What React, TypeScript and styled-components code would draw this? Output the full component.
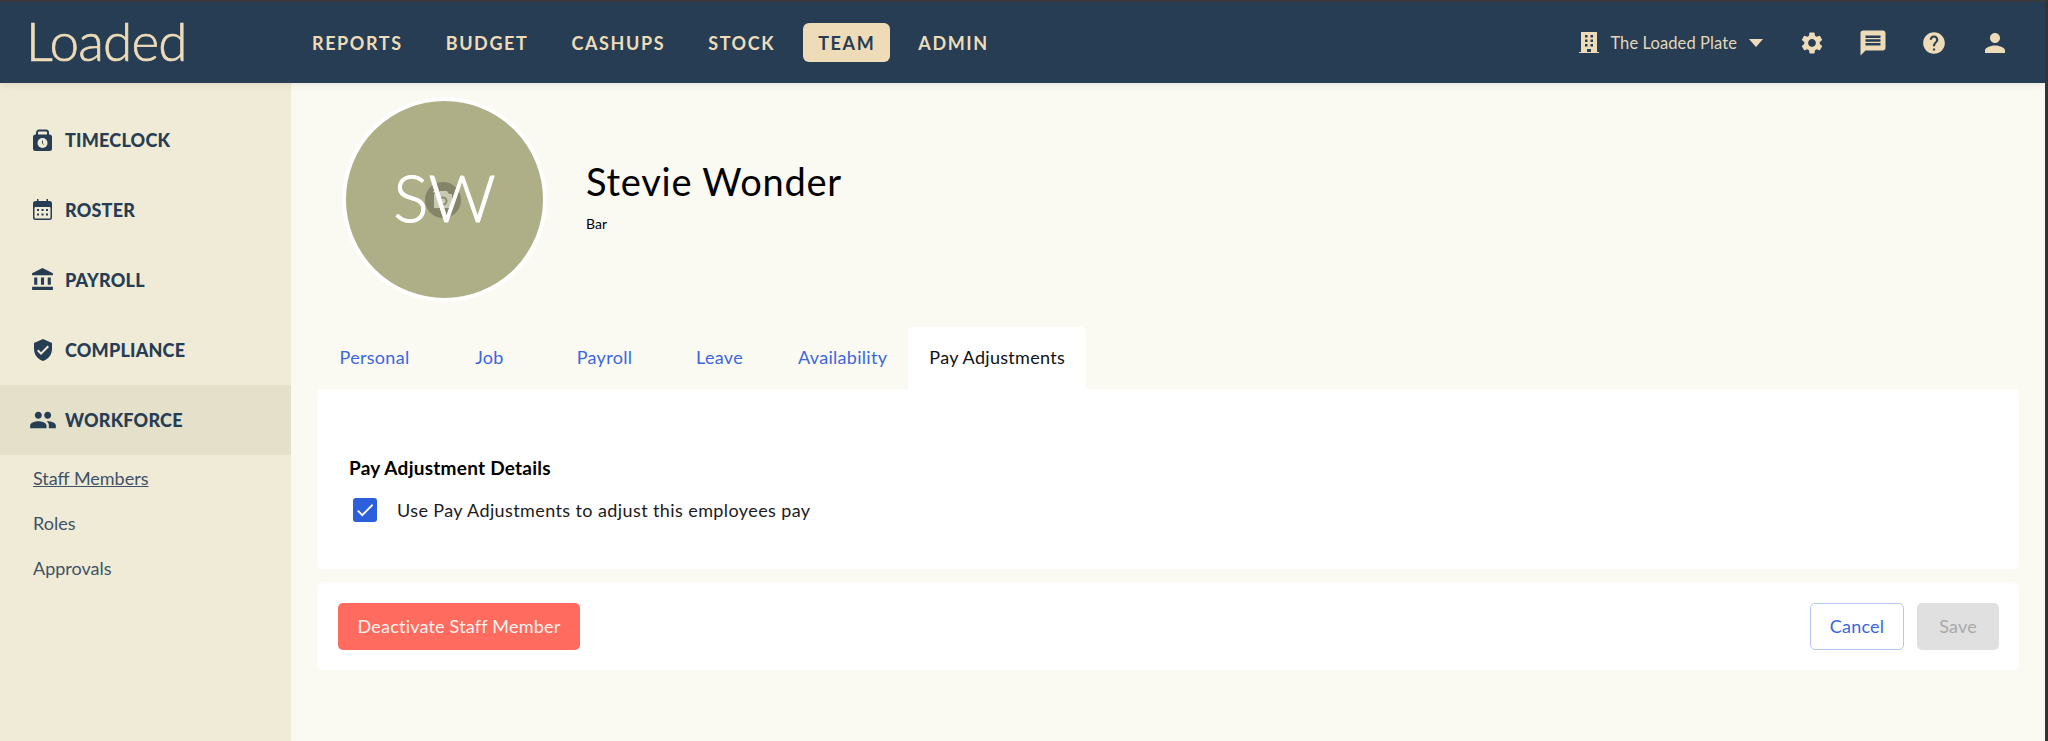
import styled, { createGlobalStyle } from "styled-components";
import {
  MdSettings,
  MdMessage,
  MdHelp,
  MdPerson,
  MdAccountBalance,
  MdPeople,
  MdVerifiedUser,
  MdCheck,
} from "react-icons/md";

const GlobalStyle = createGlobalStyle`
  html, body {
    margin: 0;
    padding: 0;
    height: 100%;
    background: #fafaf2;
  }
  body {
    font-family: "Lato", "Liberation Sans", sans-serif;
    overflow: hidden;
  }
  * {
    box-sizing: border-box;
  }
`;

const navLinks = ["REPORTS", "BUDGET", "CASHUPS", "STOCK", "TEAM", "ADMIN"];
const tabs = ["Personal", "Job", "Payroll", "Leave", "Availability", "Pay Adjustments"];

const BuildingIcon = () => (
  <svg width="20" height="21" viewBox="0 0 20 21">
    <path
      fillRule="evenodd"
      fill="#eedcb9"
      d="M2 0h16v20h2v1H0v-1h2zM6 3v2.500h2.500V3zM11.500 3v2.500H14V3zM6 7.500V10h2.500V7.500zM11.500 7.500V10H14V7.500zM6 12v2.500h2.500V12zM11.500 12v2.500H14V12zM8 17v3h4v-3z"
    />
  </svg>
);

const TimeclockIcon = () => (
  <svg width="19" height="22" viewBox="0 0 19 22">
    <path
      d="M4 7V3.500a2 2 0 0 1 2-2h7a2 2 0 0 1 2 2V7"
      fill="none"
      stroke="#263d54"
      strokeWidth="2"
    />
    <rect x="0" y="5.500" width="19" height="16.500" rx="2.500" fill="#263d54" />
    <circle cx="9.500" cy="14" r="5" fill="#f0ebd6" />
    <path d="M9.500 11.500v2.800l1.300 1.300" fill="none" stroke="#263d54" strokeWidth="0.9" />
  </svg>
);

const RosterIcon = () => (
  <svg width="19" height="21" viewBox="0 0 19 21">
    <path
      fill="#263d54"
      d="M4 0h1.500v2h8V0H15v2h1.500A2.500 2.500 0 0 1 19 4.500v14a2.500 2.500 0 0 1-2.500 2.500h-14A2.500 2.500 0 0 1 0 18.500v-14A2.500 2.500 0 0 1 2.500 2H4z"
    />
    <rect x="1.500" y="8" width="16" height="11.500" rx="1" fill="#f0ebd6" />
    {[5, 9.5, 14].map((x) =>
      [11, 15.5].map((y) => (
        <rect key={`${x}-${y}`} x={x - 1} y={y - 1} width="2" height="2" fill="#263d54" />
      ))
    )}
  </svg>
);

const CameraIcon = () => (
  <svg width="24" height="22" viewBox="0 0 24 22">
    <path d="M3 5h4l2-3h7l2 3h3v14H3z" fill="#c9c9b4" />
    <path d="M2 2h5v1.500H2z" fill="#c9c9b4" />
    <circle cx="12" cy="12" r="4.500" fill="#8d8d72" />
    <circle cx="12" cy="12" r="2.500" fill="#c9c9b4" />
  </svg>
);

const App = () => {
  return (
    <Page>
      <GlobalStyle />
      <TopBar>
        <LogoText>Loaded</LogoText>
        <MainNav>
          {navLinks.map((link) => (
            <NavLink key={link} $active={link === "TEAM"}>
              {link}
            </NavLink>
          ))}
        </MainNav>
        <TopRight>
          <VenuePicker>
            <BuildingIcon />
            <VenueName>The Loaded Plate</VenueName>
            <Caret />
          </VenuePicker>
          <IconRow>
            <MdSettings size={26} />
            <MdMessage size={30} />
            <MdHelp size={26} />
            <MdPerson size={30} />
          </IconRow>
        </TopRight>
      </TopBar>
      <Body>
        <Sidebar>
          <SideItem>
            <SideIcon>
              <TimeclockIcon />
            </SideIcon>
            TIMECLOCK
          </SideItem>
          <SideItem>
            <SideIcon>
              <RosterIcon />
            </SideIcon>
            ROSTER
          </SideItem>
          <SideItem>
            <SideIcon>
              <MdAccountBalance size={25} />
            </SideIcon>
            PAYROLL
          </SideItem>
          <SideItem>
            <SideIcon>
              <MdVerifiedUser size={24} />
            </SideIcon>
            COMPLIANCE
          </SideItem>
          <SideItem $active>
            <SideIcon>
              <MdPeople size={28} />
            </SideIcon>
            WORKFORCE
          </SideItem>
          <SubNav>
            <SubLink $current>Staff Members</SubLink>
            <SubLink>Roles</SubLink>
            <SubLink>Approvals</SubLink>
          </SubNav>
        </Sidebar>
        <Content>
          <Profile>
            <Avatar>
              <CameraBadge>
                <CameraIcon />
              </CameraBadge>
              <Initials>SW</Initials>
            </Avatar>
            <ProfileText>
              <Name>Stevie Wonder</Name>
              <RoleName>Bar</RoleName>
            </ProfileText>
          </Profile>
          <TabRow>
            {tabs.map((tab) => (
              <Tab key={tab} $active={tab === "Pay Adjustments"}>
                {tab}
              </Tab>
            ))}
          </TabRow>
          <Panel>
            <SectionTitle>Pay Adjustment Details</SectionTitle>
            <CheckRow>
              <CheckBox>
                <MdCheck size={22} />
              </CheckBox>
              Use Pay Adjustments to adjust this employees pay
            </CheckRow>
          </Panel>
          <ActionBar>
            <DangerButton>Deactivate Staff Member</DangerButton>
            <ActionRight>
              <CancelButton>Cancel</CancelButton>
              <SaveButton>Save</SaveButton>
            </ActionRight>
          </ActionBar>
        </Content>
      </Body>
    </Page>
  );
};

export default App;

const Page = styled.div`
  width: 2048px;
  height: 741px;
  display: flex;
  flex-direction: column;
  border-top: 2px solid #3a3a3a;
  border-right: 3px solid #333333;
  overflow: hidden;
`;

const TopBar = styled.header`
  position: relative;
  z-index: 1;
  height: 81px;
  flex-shrink: 0;
  display: flex;
  align-items: center;
  background: #263d54;
  color: #eedcb9;
  padding: 0 35px 0 26px;
  box-shadow: 0 2px 8px rgba(0, 0, 0, 0.08);
`;

const LogoText = styled.div`
  width: 158px;
  font-size: 53px;
  font-weight: 300;
  letter-spacing: -0.8px;
  -webkit-text-stroke: 0.7px #eedcb9;
  line-height: 1;
  margin-top: -4px;
`;

const MainNav = styled.nav`
  display: flex;
  align-items: center;
  margin-left: 113px;
`;

const NavLink = styled.a<{ $active?: boolean }>`
  padding: 0 15px;
  height: 39px;
  margin-right: 13px;
  display: flex;
  align-items: center;
  border-radius: 6px;
  font-size: 18px;
  font-weight: 700;
  letter-spacing: 1.6px;
  background: ${(p) => (p.$active ? "#eedcb9" : "transparent")};
  color: ${(p) => (p.$active ? "#263d54" : "#eedcb9")};
`;

const TopRight = styled.div`
  margin-left: auto;
  display: flex;
  align-items: center;
`;

const VenuePicker = styled.div`
  display: flex;
  align-items: center;
`;

const VenueName = styled.span`
  margin-left: 11px;
  font-size: 16.5px;
  letter-spacing: 0.1px;
  color: #e4d6b8;
`;

const Caret = styled.span`
  margin-left: 12px;
  width: 0;
  height: 0;
  border-left: 7px solid transparent;
  border-right: 7px solid transparent;
  border-top: 8px solid #eedcb9;
`;

const IconRow = styled.div`
  display: flex;
  align-items: center;
  gap: 33px;
  margin-left: 36px;
`;

const Body = styled.div`
  flex: 1;
  display: flex;
  min-height: 0;
`;

const Sidebar = styled.aside`
  width: 291px;
  flex-shrink: 0;
  background: #f0ebd6;
  padding-top: 22px;
`;

const SideItem = styled.div<{ $active?: boolean }>`
  height: 70px;
  display: flex;
  align-items: center;
  padding: 0 0 1px 25px;
  background: ${(p) => (p.$active ? "#e4e0ca" : "transparent")};
  color: #263d54;
  font-size: 18px;
  font-weight: 900;
  letter-spacing: 0.2px;
`;

const SideIcon = styled.span`
  width: 35px;
  margin-right: 5px;
  display: flex;
  align-items: center;
  justify-content: center;
  color: #263d54;
`;

const SubNav = styled.div`
  display: flex;
  flex-direction: column;
  padding: 0 0 0 33px;
`;

const SubLink = styled.a<{ $current?: boolean }>`
  height: 45px;
  display: flex;
  align-items: center;
  align-self: flex-start;
  font-size: 18px;
  color: #3f5266;
  text-decoration: ${(p) => (p.$current ? "underline" : "none")};
`;

const Content = styled.main`
  flex: 1;
  min-width: 0;
  padding: 0 26px;
  background: #fafaf2;
`;

const Profile = styled.div`
  display: flex;
  align-items: center;
  padding: 14px 0 0 25px;
`;

const Avatar = styled.div`
  position: relative;
  width: 205px;
  height: 205px;
  flex-shrink: 0;
  border-radius: 50%;
  border: 4px solid #ffffff;
  background: #aeae87;
  display: flex;
  align-items: center;
  justify-content: center;
  padding-bottom: 6px;
`;

const Initials = styled.span`
  position: relative;
  color: #ffffff;
  font-size: 66px;
  font-weight: 300;
  -webkit-text-stroke: 1px #ffffff;
`;

const CameraBadge = styled.div`
  position: absolute;
  left: 79px;
  top: 81px;
  width: 36px;
  height: 36px;
  border-radius: 50%;
  background: rgba(70, 70, 60, 0.4);
  display: flex;
  align-items: center;
  justify-content: center;
`;

const ProfileText = styled.div`
  margin-left: 39px;
  margin-top: -10px;
  color: #000000;
`;

const Name = styled.h1`
  margin: 0;
  font-size: 38px;
  font-weight: 400;
  line-height: 46px;
  letter-spacing: 0.75px;
`;

const RoleName = styled.div`
  margin-top: 11px;
  font-size: 14px;
  line-height: 17px;
`;

const TabRow = styled.div`
  display: flex;
  margin-top: 25px;
`;

const Tab = styled.div<{ $active?: boolean }>`
  min-width: 115px;
  height: 62px;
  padding: 0 21px 2px;
  display: flex;
  align-items: center;
  justify-content: center;
  border-radius: 5px 5px 0 0;
  font-size: 18px;
  letter-spacing: 0.3px;
  color: ${(p) => (p.$active ? "#111111" : "#3a66e0")};
  background: ${(p) => (p.$active ? "#ffffff" : "transparent")};
`;

const Panel = styled.section`
  height: 180px;
  padding: 67px 32px 0;
  background: #ffffff;
  border-radius: 5px;
`;

const SectionTitle = styled.h3`
  margin: 0;
  font-size: 19px;
  line-height: 24px;
  font-weight: 700;
  letter-spacing: 0.25px;
  color: #000000;
`;

const CheckRow = styled.label`
  margin-top: 18px;
  display: flex;
  align-items: center;
  gap: 20px;
  padding-left: 4px;
  font-size: 18px;
  letter-spacing: 0.4px;
  color: #1b1b1b;
`;

const CheckBox = styled.span`
  width: 24px;
  height: 24px;
  border-radius: 3px;
  background: #2b5fdc;
  color: #ffffff;
  display: flex;
  align-items: center;
  justify-content: center;
`;

const ActionBar = styled.section`
  margin-top: 13px;
  height: 88px;
  padding: 0 20px 0 21px;
  display: flex;
  align-items: center;
  justify-content: space-between;
  background: #ffffff;
  border-radius: 5px;
`;

const ActionRight = styled.div`
  display: flex;
  gap: 13px;
`;

const BaseButton = styled.button`
  height: 47px;
  border-radius: 5px;
  border: 1px solid transparent;
  font-family: inherit;
  font-size: 18px;
  letter-spacing: 0.2px;
  padding: 0;
`;

const DangerButton = styled(BaseButton)`
  width: 242px;
  background: #ff6b5e;
  color: #fff3ef;
`;

const CancelButton = styled(BaseButton)`
  width: 94px;
  background: #ffffff;
  border-color: #b4c6f5;
  color: #3a66e0;
`;

const SaveButton = styled(BaseButton)`
  width: 82px;
  background: #e0e0e0;
  color: #a9a9a9;
`;
